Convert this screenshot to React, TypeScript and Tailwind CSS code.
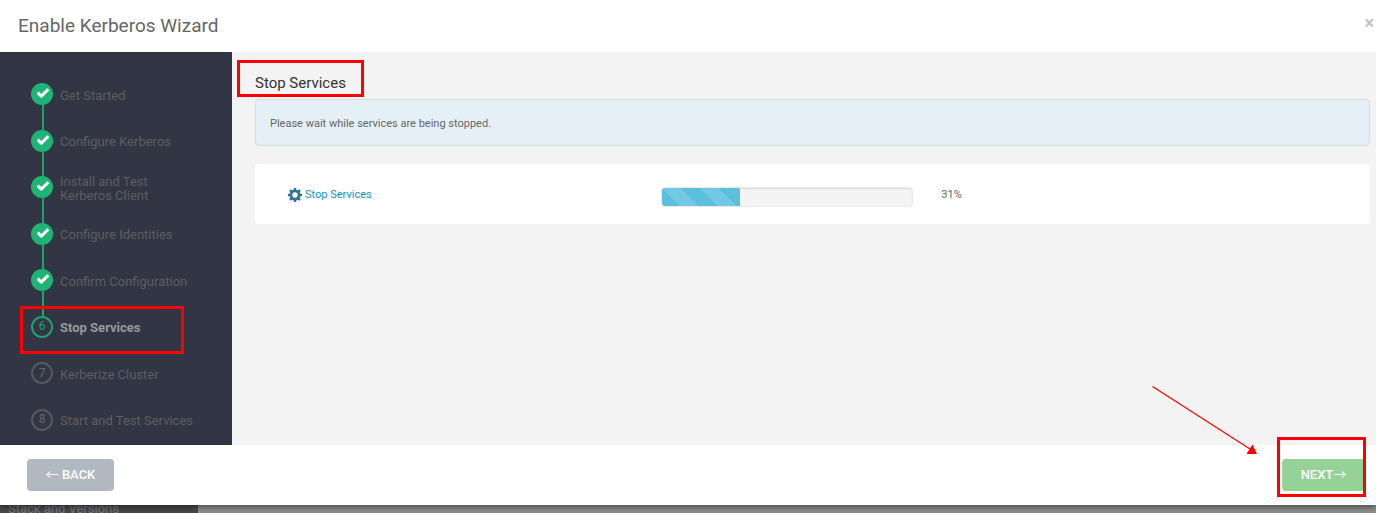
import clsx from 'clsx'

type Step = { label: string; state: 'done' | 'current' | 'pending' }

const STEPS: Step[] = [
  { label: 'Get Started',                      state: 'done' },
  { label: 'Configure Kerberos',               state: 'done' },
  { label: 'Install and Test Kerberos Client', state: 'done' },
  { label: 'Configure Identities',             state: 'done' },
  { label: 'Confirm Configuration',            state: 'done' },
  { label: 'Stop Services',                    state: 'current' },
  { label: 'Kerberize Cluster',                state: 'pending' },
  { label: 'Start and Test Services',          state: 'pending' },
]

const PROGRESS = 31

function CheckIcon() {
  return (
    <svg className="size-[22px]" viewBox="0 0 22 22" fill="none" stroke="currentColor" aria-hidden="true">
      <path d="M6.600 9.600 10.300 13.100 17.300 6.200" strokeWidth="3" strokeLinejoin="round" />
    </svg>
  )
}

const TEETH = [0, 45, 90, 135, 180, 225, 270, 315]

function CogIcon() {
  return (
    <svg className="mt-px size-[14px] text-[#2f7294]" viewBox="0 0 16 16" aria-hidden="true">
      <circle cx="8" cy="8" r="4.500" fill="none" stroke="currentColor" strokeWidth="2.800" />
      {TEETH.map(a => (
        <path key={a} d="M6 3 6.900 0H9.100L10 3Z" fill="currentColor" transform={`rotate(${a} 8 8)`} />
      ))}
    </svg>
  )
}

function StepItem({ step, index }: { step: Step; index: number }) {
  const { label, state } = step
  return (
    <li className="relative flex h-[22px] items-center gap-[7px]">
      <span
        className={clsx(
          'flex size-[22px] shrink-0 items-center justify-center rounded-full text-xs',
          state === 'done' && 'bg-[#1eb475] text-white',
          state === 'current' && 'border-2 border-[#1fa26d] pb-px text-[#1fa26d]',
          state === 'pending' && 'border-2 border-[#58595c] pb-px text-[#666666]',
        )}
      >
        {state === 'done' ? <CheckIcon /> : index + 1}
      </span>
      <span
        className={clsx(
          'w-[140px] pt-[3px] text-[13px] leading-[14px]',
          state === 'current' ? 'font-bold text-[#999999]' : 'text-[#5e5e60]',
        )}
      >
        {label}
      </span>
      {/* connector down to the next step */}
      {state === 'done' && <span className="absolute top-full left-[11px] h-[25px] w-0.5 bg-[#1fa26d]" />}
      {state === 'current' && (
        <span className="absolute -top-[10px] -left-[11px] h-[48px] w-[164px] border-3 border-[#ff0000]" />
      )}
    </li>
  )
}

export default function App() {
  return (
    <div className="bg-[#8e8e8e] font-['Roboto',sans-serif] text-[#666666]">
      <div className="relative bg-white shadow-[0_2px_6px_rgba(0,0,0,0.5)]">
        <header className="flex h-[52px] items-center justify-between pr-[2px] pl-[18px]">
          <h1 className="text-[19px]">Enable Kerberos Wizard</h1>
          <button type="button" aria-label="Close" className="pb-1.5 text-lg leading-6 font-bold text-[#c4c4c4]">×</button>
        </header>

        <div className="flex h-[393px]">
          <nav className="w-[232px] shrink-0 bg-[#323544] pt-[31px] pb-[14px] pl-[31px]">
            <ol className="flex h-full flex-col justify-between">
              {STEPS.map((step, i) => <StepItem key={step.label} step={step} index={i} />)}
            </ol>
          </nav>

          <main className="min-w-0 flex-1 bg-[#f3f3f3] pt-[21px] pr-[6px] pl-[23px]">
            <h2 className="relative text-[15px] leading-5 text-[#333333]">
              Stop Services
              <span className="absolute -top-[13px] -left-[18px] h-[37px] w-[127px] border-3 border-[#ff0000]" />
            </h2>
            <p className="mt-[6px] rounded border border-[#d2dfe3] bg-[#e4f0f6] pt-[15px] pr-[14px] pb-[13px] pl-[14px] text-[11px] leading-[17px]">
              Please wait while services are being stopped.
            </p>

            <section className="mt-[18px] grid grid-cols-[37fr_25fr_42fr] rounded bg-white px-[33px] pt-[23px] pb-[17px] text-[11px] leading-4">
              <div className="flex items-start gap-[3px]">
                <CogIcon />
                <a href="#stop-services" className="text-[#1491c1]">Stop Services</a>
              </div>
              <div
                role="progressbar"
                aria-valuenow={PROGRESS}
                aria-label="Stop Services"
                className="h-5 overflow-hidden rounded border border-[#eaeaea] bg-[#f4f4f4] shadow-[inset_0_1px_2px_rgba(0,0,0,0.1)]"
              >
                <div
                  className="h-full bg-[#5bc0de] bg-[linear-gradient(45deg,rgba(255,255,255,.15)_25%,transparent_25%,transparent_50%,rgba(255,255,255,.15)_50%,rgba(255,255,255,.15)_75%,transparent_75%,transparent)] bg-size-[38px_38px]"
                  style={{ width: `${PROGRESS}%` }}
                />
              </div>
              <span className="pl-7">{PROGRESS}%</span>
            </section>
          </main>
        </div>

        <footer className="relative flex h-[60px] items-center justify-between pr-[11px] pl-[27px] text-[13px] font-medium text-white">
          <button type="button" className="h-8 w-[87px] rounded bg-[#b2b8c0]">
            <span className="font-['Noto_Sans_CJK_SC',sans-serif] leading-4 font-normal">←</span> BACK
          </button>
          <div className="relative">
            <button type="button" className="h-8 w-[83px] rounded bg-[#95d295]">
              NEXT<span className="font-['Noto_Sans_CJK_SC',sans-serif] leading-4 font-normal">→</span>
            </button>
            <span className="absolute -top-[22px] -left-[5px] h-[60px] w-[89px] border-3 border-[#ff0000]" />
          </div>
          <svg className="absolute right-[118px] bottom-[49px]" width="106" height="70" viewBox="0 0 106 70" aria-hidden="true">
            <path d="M0.5 0.5 98 63" stroke="#ff0000" strokeWidth="1.2" fill="none" />
            <path d="M105 68H94.500L100.500 58.500Z" fill="#ff0000" />
          </svg>
        </footer>
      </div>

      {/* page behind the wizard */}
      <div className="h-2 w-[198px] overflow-hidden bg-[#48484c] pl-2 text-[13px] leading-2 text-[#77777a]">
        Stack and Versions
      </div>
    </div>
  )
}
